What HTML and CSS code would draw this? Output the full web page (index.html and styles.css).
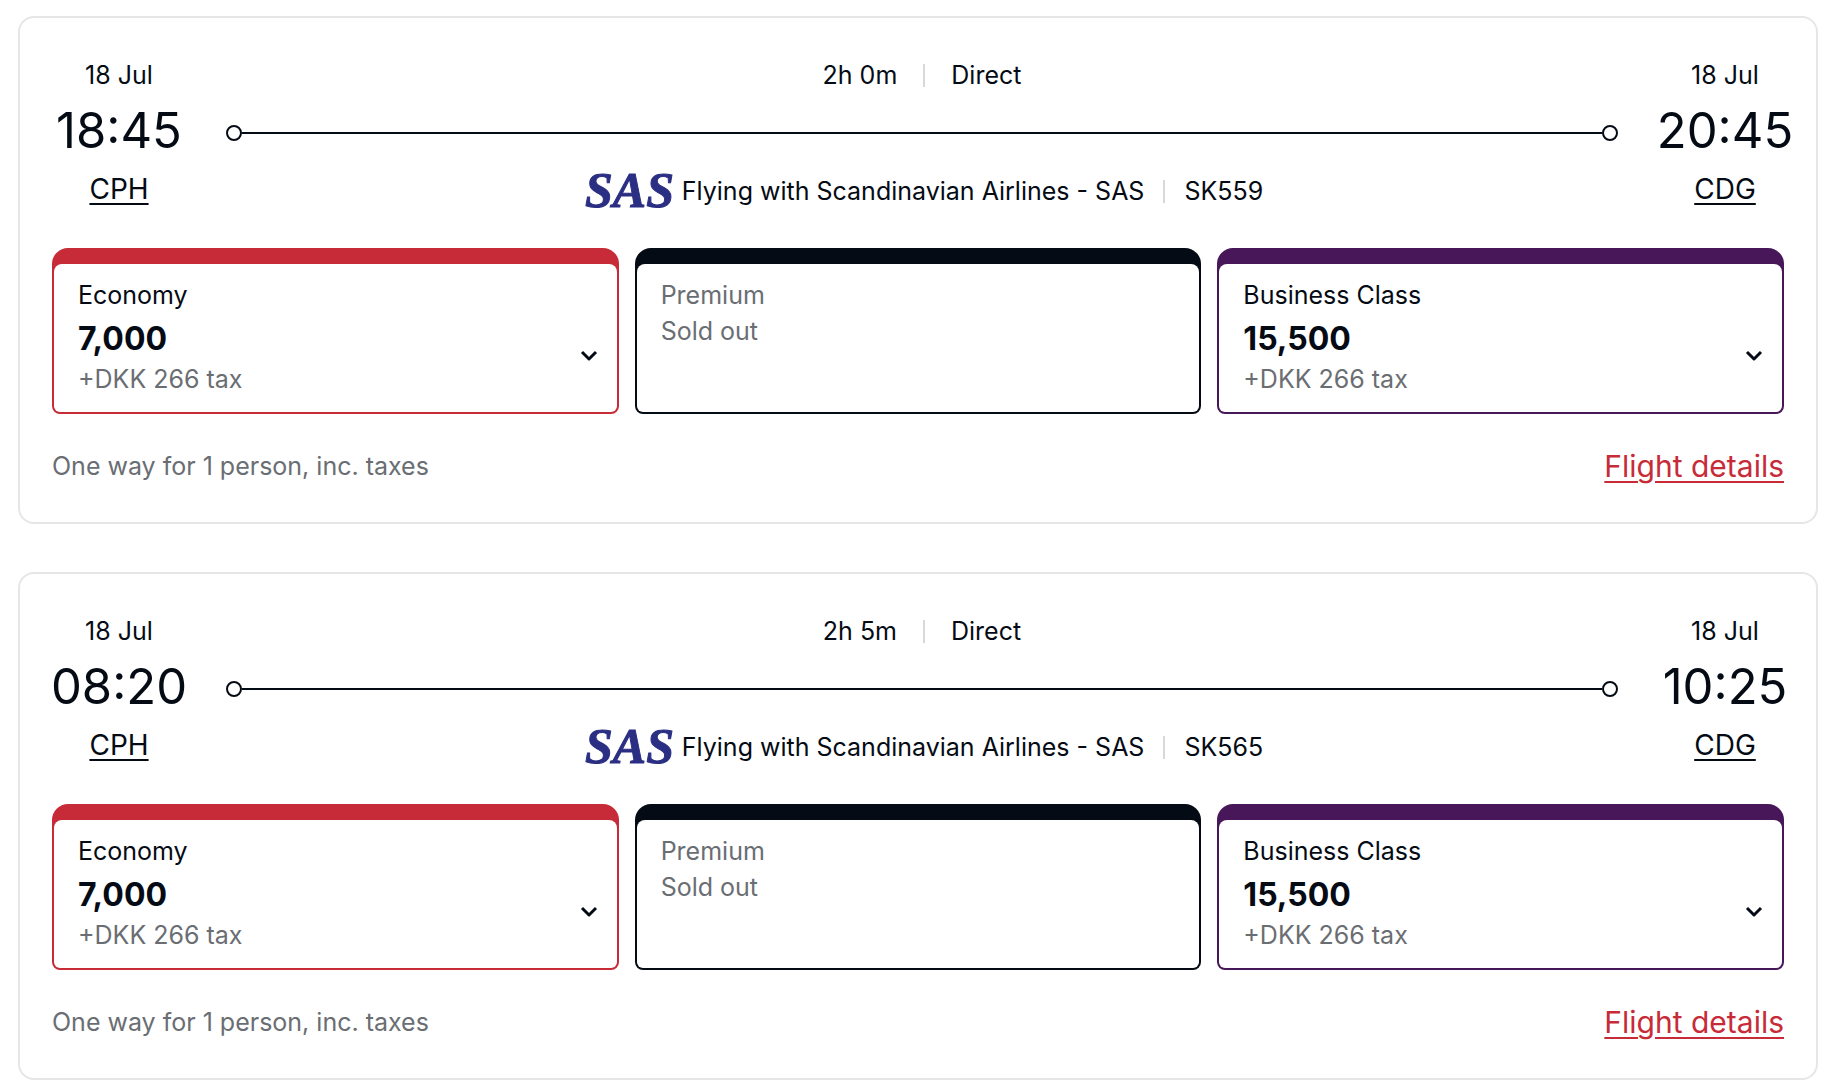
FILE: index.html
```html
<!DOCTYPE html>
<html lang="en">

<head>
    <meta charset="UTF-8">
    <meta name="viewport" content="width=device-width, initial-scale=1.0">
    <title>Select your flight</title>
    <link rel="stylesheet" href="styles.css">
</head>

<body>
    <main class="flights">
        <!-- CPH 18:45 - CDG 20:45 -->
        <article class="flight">
            <div class="route">
                <div class="stop">
                    <span class="date">18 Jul</span>
                    <time class="time">18:45</time>
                    <a class="airport" href="#cph">CPH</a>
                </div>
                <div class="journey">
                    <div class="duration">
                        <span>2h 0m</span>
                        <span class="divider"></span>
                        <span>Direct</span>
                    </div>
                    <div class="track"><span class="line"></span></div>
                    <div class="carrier">
                        <svg class="logo" viewBox="0 0 104 64" role="img" aria-label="SAS">
                            <text x="4" y="48">SAS</text>
                        </svg>
                        <span>Flying with Scandinavian Airlines - SAS</span>
                        <span class="divider"></span>
                        <span>SK559</span>
                    </div>
                </div>
                <div class="stop">
                    <span class="date">18 Jul</span>
                    <time class="time">20:45</time>
                    <a class="airport" href="#cdg">CDG</a>
                </div>
            </div>

            <div class="fares">
                <button class="fare economy">
                    <span class="fare-body">
                        <span class="fare-name">Economy</span>
                        <span class="fare-row">
                            <span>
                                <span class="price">7,000</span>
                                <span class="tax">+DKK 266 tax</span>
                            </span>
                            <svg class="chevron" viewBox="0 0 16 10"><path d="M1 1l7 7 7-7"/></svg>
                        </span>
                    </span>
                </button>
                <button class="fare premium" disabled>
                    <span class="fare-body">
                        <span class="fare-name">Premium</span>
                        <span class="sold-out">Sold out</span>
                    </span>
                </button>
                <button class="fare business">
                    <span class="fare-body">
                        <span class="fare-name">Business Class</span>
                        <span class="fare-row">
                            <span>
                                <span class="price">15,500</span>
                                <span class="tax">+DKK 266 tax</span>
                            </span>
                            <svg class="chevron" viewBox="0 0 16 10"><path d="M1 1l7 7 7-7"/></svg>
                        </span>
                    </span>
                </button>
            </div>

            <div class="summary">
                <span>One way for 1 person, inc. taxes</span>
                <a class="details" href="#sk559">Flight details</a>
            </div>
        </article>

        <!-- CPH 08:20 - CDG 10:25 -->
        <article class="flight">
            <div class="route">
                <div class="stop">
                    <span class="date">18 Jul</span>
                    <time class="time">08:20</time>
                    <a class="airport" href="#cph">CPH</a>
                </div>
                <div class="journey">
                    <div class="duration">
                        <span>2h 5m</span>
                        <span class="divider"></span>
                        <span>Direct</span>
                    </div>
                    <div class="track"><span class="line"></span></div>
                    <div class="carrier">
                        <svg class="logo" viewBox="0 0 104 64" role="img" aria-label="SAS">
                            <text x="4" y="48">SAS</text>
                        </svg>
                        <span>Flying with Scandinavian Airlines - SAS</span>
                        <span class="divider"></span>
                        <span>SK565</span>
                    </div>
                </div>
                <div class="stop">
                    <span class="date">18 Jul</span>
                    <time class="time">10:25</time>
                    <a class="airport" href="#cdg">CDG</a>
                </div>
            </div>

            <div class="fares">
                <button class="fare economy">
                    <span class="fare-body">
                        <span class="fare-name">Economy</span>
                        <span class="fare-row">
                            <span>
                                <span class="price">7,000</span>
                                <span class="tax">+DKK 266 tax</span>
                            </span>
                            <svg class="chevron" viewBox="0 0 16 10"><path d="M1 1l7 7 7-7"/></svg>
                        </span>
                    </span>
                </button>
                <button class="fare premium" disabled>
                    <span class="fare-body">
                        <span class="fare-name">Premium</span>
                        <span class="sold-out">Sold out</span>
                    </span>
                </button>
                <button class="fare business">
                    <span class="fare-body">
                        <span class="fare-name">Business Class</span>
                        <span class="fare-row">
                            <span>
                                <span class="price">15,500</span>
                                <span class="tax">+DKK 266 tax</span>
                            </span>
                            <svg class="chevron" viewBox="0 0 16 10"><path d="M1 1l7 7 7-7"/></svg>
                        </span>
                    </span>
                </button>
            </div>

            <div class="summary">
                <span>One way for 1 person, inc. taxes</span>
                <a class="details" href="#sk565">Flight details</a>
            </div>
        </article>
    </main>
</body>

</html>
```
FILE: styles.css
```css
*,
*::before,
*::after {
    box-sizing: border-box;
}

body {
    margin: 0;
    font-family: Inter, "Liberation Sans", sans-serif;
    font-size: 25px;
    line-height: 32px;
    color: #050b14;
    background-color: #fff;
}

.flights {
    display: flex;
    flex-direction: column;
    gap: 48px;
    padding: 16px 10px 0 18px;
}

.flight {
    border: 2px solid #e6e6e6;
    border-radius: 16px;
}

/* Route: departure, journey line, arrival */
.route {
    display: flex;
    gap: 40px;
    padding: 41px 24px 41px 32px;
}

.stop {
    display: flex;
    flex-direction: column;
    align-items: center;
    gap: 8px;
    width: 134px;
}

.time {
    font-size: 49px;
    line-height: 64px;
}

.airport {
    font-size: 28px;
    line-height: 36px;
    color: inherit;
    text-decoration-thickness: 2px;
    text-underline-offset: 4px;
}

.journey {
    flex: 1;
    display: flex;
    flex-direction: column;
    justify-content: space-between;
}

.duration,
.carrier {
    display: flex;
    justify-content: center;
    align-items: center;
}

.duration {
    gap: 26px;
}

.carrier {
    gap: 19px;
}

.divider {
    width: 2px;
    height: 23px;
    background-color: #d8d8d8;
}

.track {
    display: flex;
    align-items: center;
}

.track::before,
.track::after {
    content: "";
    width: 16px;
    height: 16px;
    border: 2px solid #050b14;
    border-radius: 50%;
}

.line {
    flex: 1;
    height: 2px;
    background-color: #050b14;
}

.logo {
    width: 104px;
    height: 64px;
    margin: -16px -22px -16px 0;
    overflow: visible;
}

.logo text {
    font-family: "Liberation Serif", serif;
    font-size: 50px;
    font-weight: bold;
    font-style: italic;
    fill: #2b2f83;
    stroke: #2b2f83;
    stroke-width: 1;
}

/* Fares */
.fares {
    display: grid;
    grid-template-columns: repeat(3, 1fr);
    gap: 16px;
    padding: 0 32px;
}

.fare {
    display: flex;
    padding: 16px 2px 2px;
    border: none;
    border-radius: 16px 16px 8px 8px;
    font: inherit;
    color: inherit;
    text-align: left;
    cursor: pointer;
}

.fare-body {
    flex: 1;
    padding: 13px 20px 13px 24px;
    border-radius: 8px 8px 6px 6px;
    background-color: #fff;
}

.economy {
    background-color: #c82b38;
}

.premium {
    background-color: #050b14;
    color: #6a6e73;
    cursor: default;
}

.business {
    background-color: #47175a;
}

.fare-name,
.sold-out {
    display: block;
    line-height: 36px;
}

.fare-row {
    display: flex;
    justify-content: space-between;
    align-items: center;
    padding-bottom: 6px;
}

.price {
    display: block;
    font-size: 32px;
    font-weight: 700;
    line-height: 52px;
}

.tax {
    display: block;
    line-height: 28px;
    color: #6a6e73;
}

.chevron {
    width: 16px;
    height: 10px;
    margin-top: 6px;
    overflow: visible;
    fill: none;
    stroke: #050b14;
    stroke-width: 3;
    stroke-linejoin: round;
}

.summary {
    display: flex;
    justify-content: space-between;
    align-items: center;
    padding: 36px 32px 40px;
    color: #6a6e73;
}

.details {
    font-size: 30px;
    color: #c82b38;
    text-decoration-thickness: 2px;
    text-underline-offset: 4px;
}
```
